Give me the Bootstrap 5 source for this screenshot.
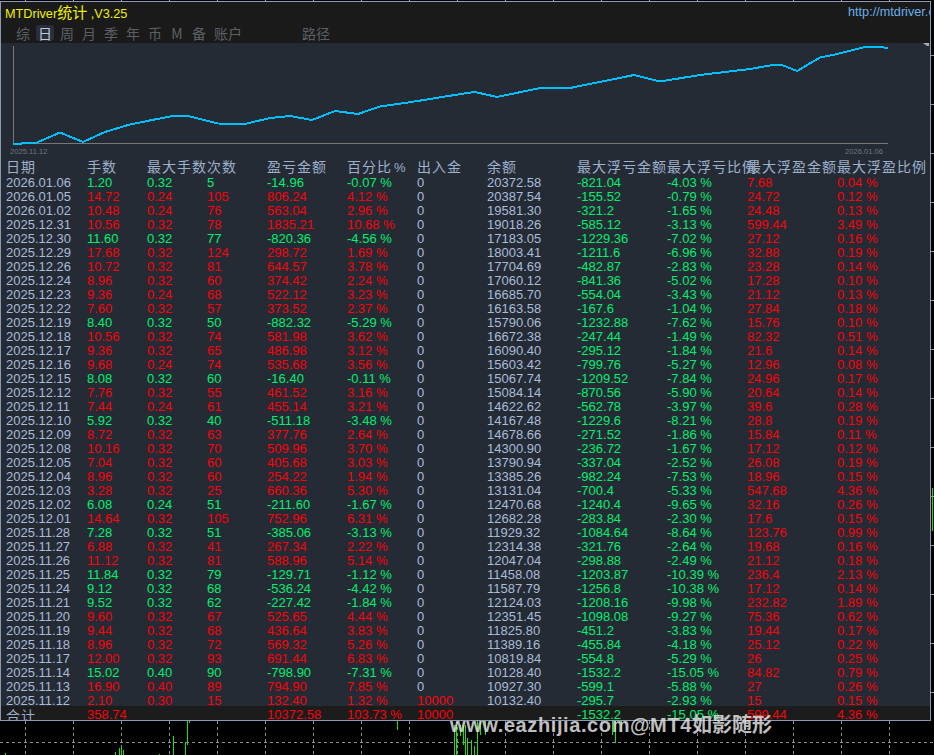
<!DOCTYPE html>
<html lang="zh-CN">
  <head>
    <meta charset="UTF-8" />
    <meta name="viewport" content="width=device-width, initial-scale=1.0" />
    <title>MTDriver统计</title>
    <link href="https://cdn.jsdelivr.net/npm/bootstrap@5.3.0/dist/css/bootstrap.min.css" rel="stylesheet" />
    <style>
      body {
        background: #000;
        font-family: "Liberation Sans", "Noto Sans CJK SC", sans-serif;
        overflow: hidden;
      }
      #screen {
        width: 934px;
        height: 755px;
        overflow: hidden;
      }
      .edge-strip {
        display: block;
      }
      #panel {
        width: 931px;
        height: 720px;
        flex: none;
        border: 1px solid #8a9ab3;
        background: #252b35;
        overflow: hidden;
      }
      .title-bar {
        height: 41px;
        background: #1a1a1a;
      }
      .title-row {
        height: 23px;
        padding: 1px 0 0 4px;
        font-size: 12.7px;
        line-height: 18px;
      }
      .app-name {
        color: #f0f000;
      }
      .app-name b {
        font-family: "Noto Sans CJK SC", sans-serif;
        font-weight: 400;
        font-size: 15px;
      }
      .app-link {
        color: #6aaee8;
        margin-right: -2px;
        width: 84px;
        white-space: nowrap;
        overflow: hidden;
      }
      .tab-row {
        padding-left: 11px;
        height: 17px;
      }
      .tab-item {
        width: 22px;
        height: 16px;
        text-align: center;
        color: #5c6066;
        font: 14px/16px "Noto Sans CJK SC", sans-serif;
        overflow: hidden;
      }
      .tab-item.on {
        margin: 0 2px;
        width: 18px;
        background: #2a2e36;
        border-radius: 3px;
        color: #b8cce4;
      }
      .tab-item.wide {
        width: 36px;
      }
      .tab-item.far {
        margin-left: 52px;
      }
      .chart-box {
        display: block;
      }
      .stat-table {
        --bs-table-bg: transparent;
        --bs-table-color: #a9bcd9;
        table-layout: fixed;
        width: 929px;
        margin: 0;
      }
      .stat-table th,
      .stat-table td {
        padding: 0;
        border: 0;
        height: 14px;
        line-height: 14px;
        font-size: 13px;
        font-weight: 400;
        white-space: nowrap;
        background: transparent;
      }
      .stat-table th {
        height: 17px;
        line-height: 15px;
        vertical-align: top;
        font-family: "Noto Sans CJK SC", sans-serif;
        font-size: 14px;
        letter-spacing: 1px;
        color: #9db0cb;
      }
      .stat-table th i {
        font: 13px "Liberation Sans", sans-serif;
        margin-left: 2px;
      }
      .stat-table .sum-row td {
        background: #1c1c1c;
        box-shadow: 0 -2px 0 #1c1c1c;
      }
      .stat-table .sum-row .sum-label {
        font-family: "Noto Sans CJK SC", sans-serif;
        font-size: 14px;
        letter-spacing: 1px;
        color: #9db0cb;
      }
      .stat-table td.gain {
        color: #fa0008;
      }
      .stat-table td.loss {
        color: #00ee6e;
      }
      .col-a { width: 86px; }
      .col-b { width: 60px; }
      .col-c { width: 70px; }
      .col-d { width: 80px; }
      .col-e { width: 90px; }
      .col-f { width: 93px; }
      .pad-first {
        padding-left: 5px !important;
      }
      #watermark {
        position: absolute;
        left: 450px;
        top: 713px;
        font-size: 20px;
        line-height: 22px;
        font-weight: 700;
        letter-spacing: 0.6px;
        color: rgba(226, 226, 226, 0.85);
        white-space: nowrap;
      }
      #watermark span {
        font-family: "Noto Sans CJK SC", sans-serif;
        letter-spacing: 0;
      }
    </style>
  </head>
  <body>
    <div id="screen" class="position-relative">
      <svg id="top-ticks" class="edge-strip" width="934" height="1"></svg>
      <div class="d-flex">
        <div id="panel">
          <div class="title-bar">
            <div class="title-row d-flex justify-content-between">
              <div class="app-name">MTDriver<b>统计</b> ,V3.25</div>
              <div class="app-link">http://mtdriver.com</div>
            </div>
            <div class="tab-row d-flex">
              <span class="tab-item">综</span>
              <span class="tab-item on">日</span>
              <span class="tab-item">周</span>
              <span class="tab-item">月</span>
              <span class="tab-item">季</span>
              <span class="tab-item">年</span>
              <span class="tab-item">币</span>
              <span class="tab-item">M</span>
              <span class="tab-item">备</span>
              <span class="tab-item wide">账户</span>
              <span class="tab-item wide far">路径</span>
            </div>
          </div>

          <!-- Balance curve -->
          <svg class="chart-box" width="929" height="116" viewBox="1 43 929 116">
            <path d="M13.5 46V144M13 143.5H888" stroke="#777" fill="none" />
            <polyline
              fill="none"
              stroke="#00bfff"
              stroke-width="2"
              shape-rendering="crispEdges"
              points="13,144 25,143.3 37,142.5 60,132.5 83,142 105,132 130,124.5 152,120 175,115.5 190,116.5 218,123.5 245,124 270,118 290,116 312,120 335,111 358,114 380,106.5 405,103 430,99 467,93 475,92 497,97 540,88 570,88 634,75 660,81.5 700,75 750,69 770,65.5 782,65 797,71 820,57.5 833,55 865,47 875,46.5 888,48"
            />
            <polygon points="923,43 927,40 929,40 929,46 927,46" fill="#aaa" />
            <text x="10" y="154" font-size="7.6" fill="#6f7681">2025.11.12</text>
            <text x="845" y="154" font-size="7.6" fill="#6f7681">2026.01.06</text>
          </svg>

          <table class="table table-borderless stat-table">
            <colgroup>
              <col class="col-a" /><col class="col-b" /><col class="col-b" /><col class="col-b" />
              <col class="col-d" /><col class="col-c" /><col class="col-c" /><col class="col-e" />
              <col class="col-e" /><col class="col-d" /><col class="col-e" /><col class="col-f" />
            </colgroup>
            <thead>
              <tr>
                <th class="pad-first">日期</th>
                <th>手数</th>
                <th>最大手数</th>
                <th>次数</th>
                <th>盈亏金额</th>
                <th>百分比<i>%</i></th>
                <th>出入金</th>
                <th>余额</th>
                <th>最大浮亏金额</th>
                <th>最大浮亏比例</th>
                <th>最大浮盈金额</th>
                <th>最大浮盈比例</th>
              </tr>
            </thead>
            <tbody id="rows"></tbody>
          </table>
        </div>
        <svg id="right-ticks" width="3" height="720"></svg>
      </div>
      <svg id="bottom-chart" class="edge-strip" width="934" height="34" viewBox="0 721 934 34"></svg>
      <div id="watermark">www.eazhijia.com@MT4<span>如影随形</span></div>
    </div>

    <script src="https://cdn.jsdelivr.net/npm/bootstrap@5.3.0/dist/js/bootstrap.bundle.min.js"></script>
    <script>
      // date lots maxLots count profit pct inout balance maxLoss lossPct maxGain gainPct
      const data = `2026.01.06 1.20 0.32 5 -14.96 -0.07 0 20372.58 -821.04 -4.03 7.68 0.04
2026.01.05 14.72 0.24 105 806.24 4.12 0 20387.54 -155.52 -0.79 24.72 0.12
2026.01.02 10.48 0.24 76 563.04 2.96 0 19581.30 -321.2 -1.65 24.48 0.13
2025.12.31 10.56 0.32 78 1835.21 10.68 0 19018.26 -585.12 -3.13 599.44 3.49
2025.12.30 11.60 0.32 77 -820.36 -4.56 0 17183.05 -1229.36 -7.02 27.12 0.16
2025.12.29 17.68 0.32 124 298.72 1.69 0 18003.41 -1211.6 -6.96 32.88 0.19
2025.12.26 10.72 0.32 81 644.57 3.78 0 17704.69 -482.87 -2.83 23.28 0.14
2025.12.24 8.96 0.32 60 374.42 2.24 0 17060.12 -841.36 -5.02 17.28 0.10
2025.12.23 9.36 0.24 68 522.12 3.23 0 16685.70 -554.04 -3.43 21.12 0.13
2025.12.22 7.60 0.32 57 373.52 2.37 0 16163.58 -167.6 -1.04 27.84 0.18
2025.12.19 8.40 0.32 50 -882.32 -5.29 0 15790.06 -1232.88 -7.62 15.76 0.10
2025.12.18 10.56 0.32 74 581.98 3.62 0 16672.38 -247.44 -1.49 82.32 0.51
2025.12.17 9.36 0.32 65 486.98 3.12 0 16090.40 -295.12 -1.84 21.6 0.14
2025.12.16 9.68 0.24 74 535.68 3.56 0 15603.42 -799.76 -5.27 12.96 0.08
2025.12.15 8.08 0.32 60 -16.40 -0.11 0 15067.74 -1209.52 -7.84 24.96 0.17
2025.12.12 7.76 0.32 55 461.52 3.16 0 15084.14 -870.56 -5.90 20.64 0.14
2025.12.11 7.44 0.24 61 455.14 3.21 0 14622.62 -562.78 -3.97 39.6 0.28
2025.12.10 5.92 0.32 40 -511.18 -3.48 0 14167.48 -1229.6 -8.21 28.8 0.19
2025.12.09 8.72 0.32 63 377.76 2.64 0 14678.66 -271.52 -1.86 15.84 0.11
2025.12.08 10.16 0.32 70 509.96 3.70 0 14300.90 -236.72 -1.67 17.12 0.12
2025.12.05 7.04 0.32 60 405.68 3.03 0 13790.94 -337.04 -2.52 26.08 0.19
2025.12.04 8.96 0.32 60 254.22 1.94 0 13385.26 -982.24 -7.53 18.96 0.15
2025.12.03 3.28 0.32 25 660.36 5.30 0 13131.04 -700.4 -5.33 547.68 4.36
2025.12.02 6.08 0.24 51 -211.60 -1.67 0 12470.68 -1240.4 -9.65 32.16 0.26
2025.12.01 14.64 0.32 105 752.96 6.31 0 12682.28 -283.84 -2.30 17.6 0.15
2025.11.28 7.28 0.32 51 -385.06 -3.13 0 11929.32 -1084.64 -8.64 123.76 0.99
2025.11.27 6.88 0.32 41 267.34 2.22 0 12314.38 -321.76 -2.64 19.68 0.16
2025.11.26 11.12 0.32 81 588.96 5.14 0 12047.04 -298.88 -2.49 21.12 0.18
2025.11.25 11.84 0.32 79 -129.71 -1.12 0 11458.08 -1203.87 -10.39 236.4 2.13
2025.11.24 9.12 0.32 68 -536.24 -4.42 0 11587.79 -1256.8 -10.38 17.12 0.14
2025.11.21 9.52 0.32 62 -227.42 -1.84 0 12124.03 -1208.16 -9.98 232.82 1.89
2025.11.20 9.60 0.32 67 525.65 4.44 0 12351.45 -1098.08 -9.27 75.36 0.62
2025.11.19 9.44 0.32 68 436.64 3.83 0 11825.80 -451.2 -3.83 19.44 0.17
2025.11.18 8.96 0.32 72 569.32 5.26 0 11389.16 -455.84 -4.18 25.12 0.22
2025.11.17 12.00 0.32 93 691.44 6.83 0 10819.84 -554.8 -5.29 26 0.25
2025.11.14 15.02 0.40 90 -798.90 -7.31 0 10128.40 -1532.2 -15.05 84.82 0.79
2025.11.13 16.90 0.40 89 794.90 7.85 0 10927.30 -599.1 -5.88 27 0.26
2025.11.12 2.10 0.30 15 132.40 1.32 10000 10132.40 -295.7 -2.93 15 0.15`;

      // Build table rows
      const rows = document.getElementById('rows');
      function cell(tr, text, cls) {
        const td = document.createElement('td');
        td.textContent = text;
        if (cls) td.className = cls;
        tr.appendChild(td);
      }
      data.split('\n').forEach(line => {
        const v = line.split(' ');
        const side = v[4].startsWith('-') ? 'loss' : 'gain';
        const tr = document.createElement('tr');
        cell(tr, v[0], 'pad-first');
        cell(tr, v[1], side);
        cell(tr, v[2], side);
        cell(tr, v[3], side);
        cell(tr, v[4], side);
        cell(tr, v[5] + ' %', side);
        cell(tr, v[6], v[6] === '0' ? '' : 'gain');
        cell(tr, v[7]);
        cell(tr, v[8], 'loss');
        cell(tr, v[9] + ' %', 'loss');
        cell(tr, v[10], 'gain');
        cell(tr, v[11] + ' %', 'gain');
        rows.appendChild(tr);
      });
      const sum = document.createElement('tr');
      sum.className = 'sum-row';
      cell(sum, '合计', 'pad-first sum-label');
      cell(sum, '358.74', 'gain');
      cell(sum, '');
      cell(sum, '');
      cell(sum, '10372.58', 'gain');
      cell(sum, '103.73 %', 'gain');
      cell(sum, '10000', 'gain');
      cell(sum, '');
      cell(sum, '-1532.2', 'loss');
      cell(sum, '-15.05 %', 'loss');
      cell(sum, '599.44', 'gain');
      cell(sum, '4.36 %', 'gain');
      rows.appendChild(sum);

      // Background terminal chart around the panel
      let topTicks = '';
      let bottomGrid = '';
      for (let x = 25; x < 934; x += 48) {
        topTicks += `<rect x="${x}" y="0" width="1" height="1" fill="#bbb"/>`;
        bottomGrid += `<path d="M${x + 0.5} 721V755" stroke="#8a8f98" stroke-dasharray="3 3"/>`;
      }
      bottomGrid += '<path d="M0 742.5H934" stroke="#8a8f98" stroke-dasharray="3 3"/>';
      const bars = [
        [5, 753, 755], [115, 752, 755], [119, 748, 755], [121, 747, 755], [123, 750, 755],
        [159, 754, 755], [173, 736, 755], [185, 742, 755], [187, 721, 745], [189, 721, 723],
        [397, 721, 730], [454, 725, 755], [456, 725, 755], [460, 725, 736], [463, 725, 745],
        [465, 725, 755], [467, 738, 755], [471, 740, 755], [474, 746, 755], [477, 721, 755],
        [480, 721, 735], [485, 721, 735], [612, 721, 735], [615, 721, 743], [621, 721, 732]
      ];
      bars.forEach(b => {
        bottomGrid += `<rect x="${b[0]}" y="${b[1]}" width="1" height="${b[2] - b[1]}" fill="#22e000"/>`;
      });
      document.getElementById('top-ticks').innerHTML = topTicks;
      document.getElementById('bottom-chart').innerHTML = bottomGrid;

      let rightTicks = '<rect x="1" y="487" width="1" height="43" fill="#22e000"/>';
      for (let y = 54; y < 720; y += 49) {
        rightTicks += `<rect x="0" y="${y}" width="3" height="1" fill="#999"/>`;
      }
      document.getElementById('right-ticks').innerHTML = rightTicks;
    </script>
  </body>
</html>
